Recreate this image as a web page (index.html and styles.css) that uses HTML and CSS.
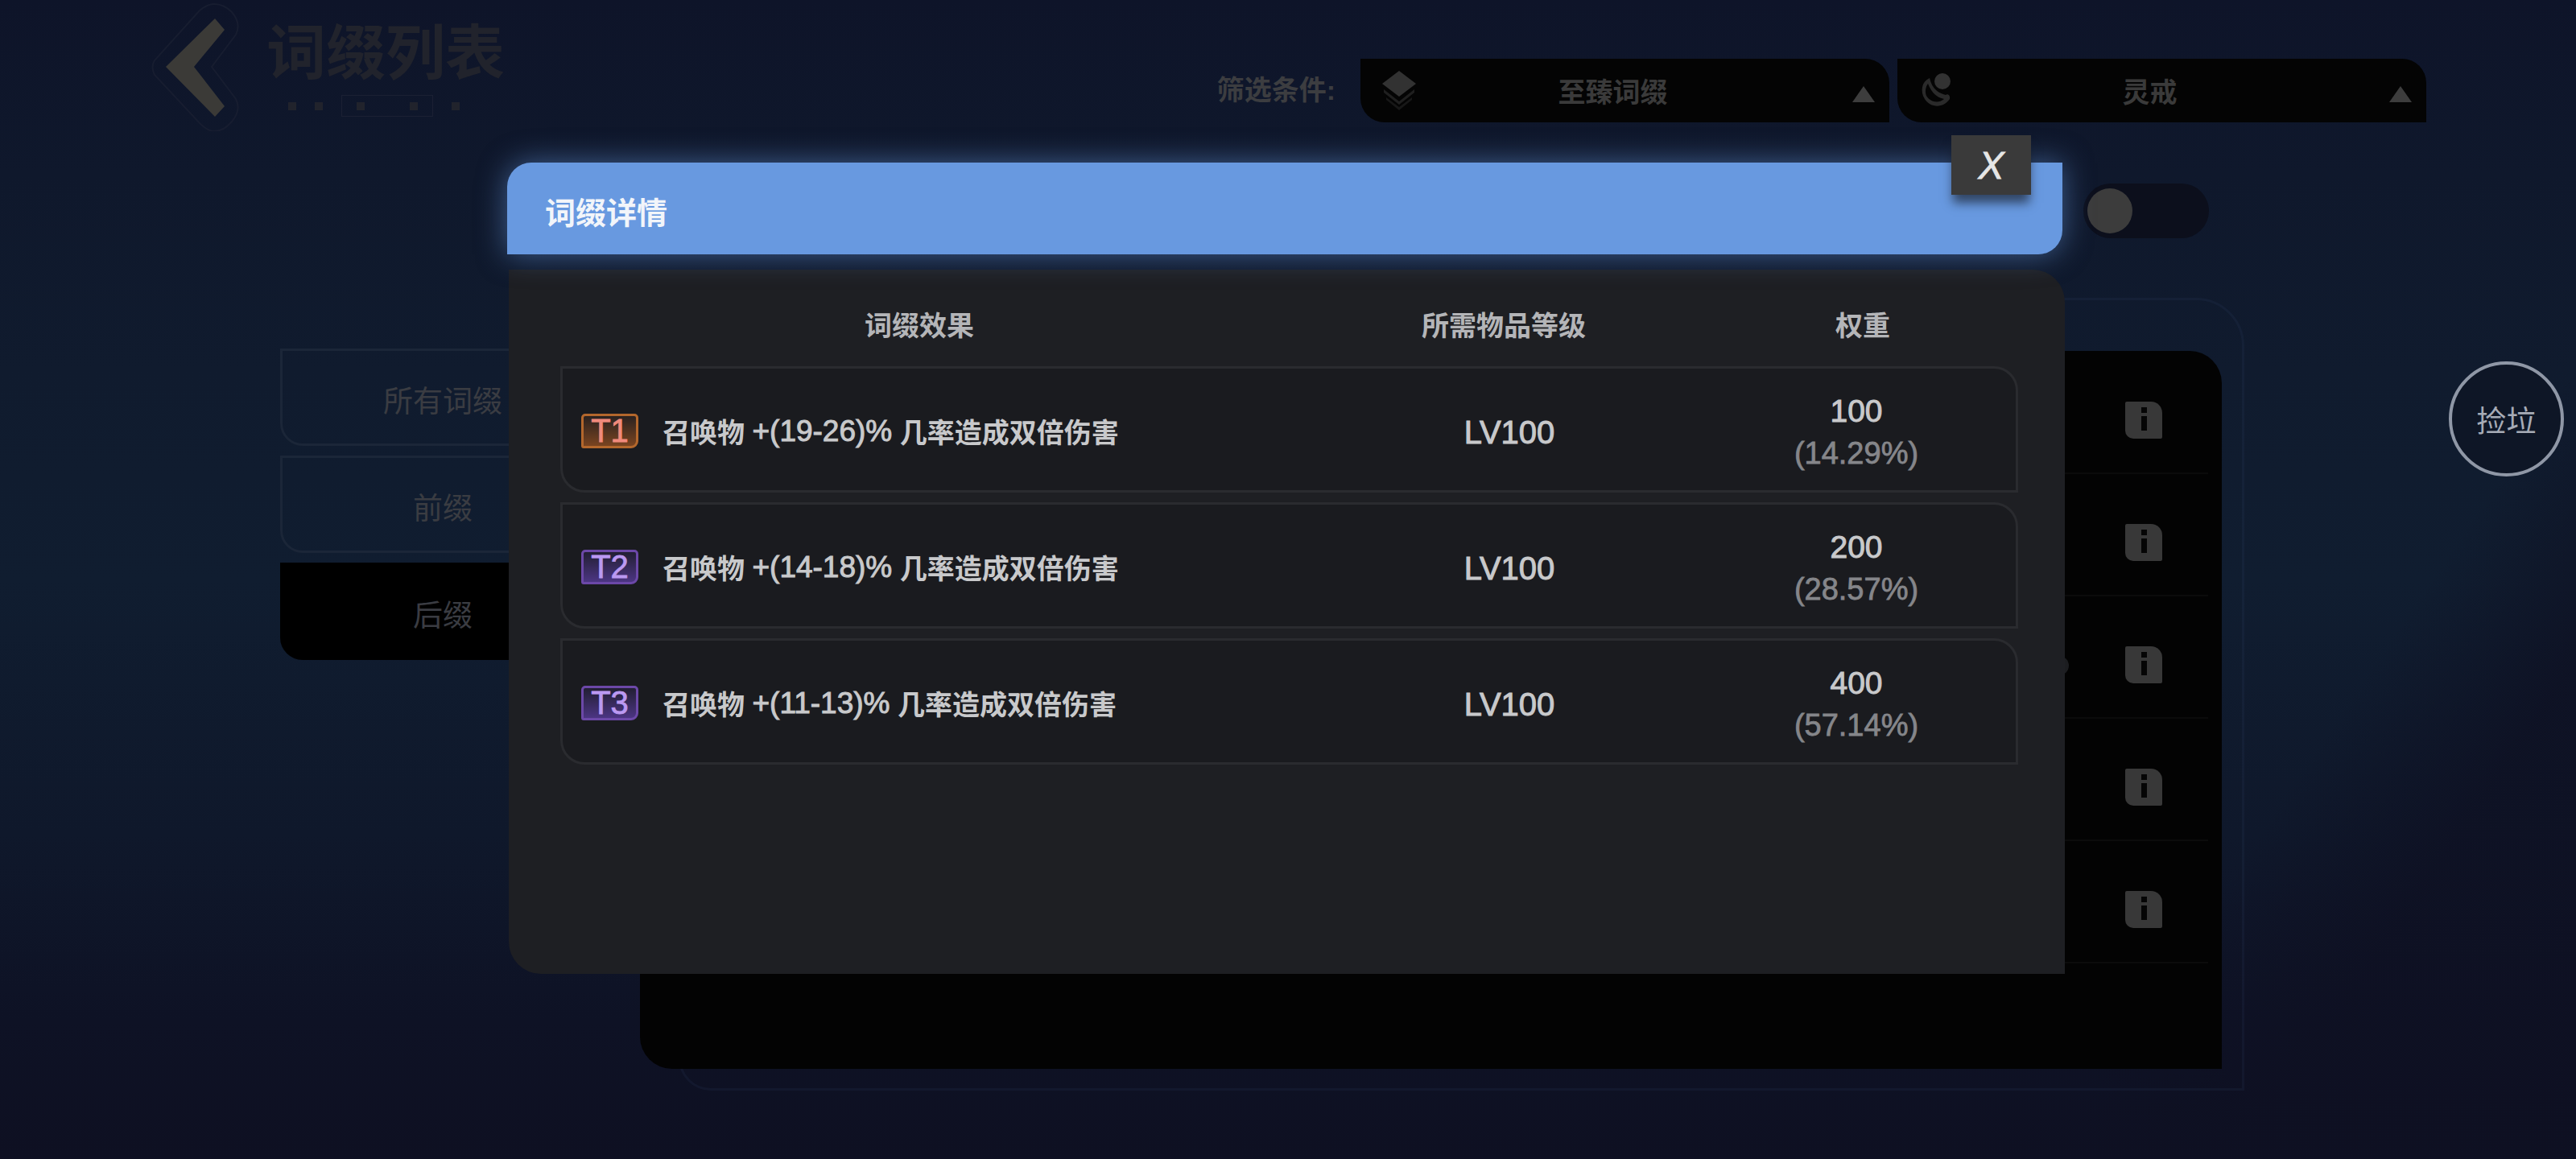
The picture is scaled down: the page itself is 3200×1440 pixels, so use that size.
FILE: index.html
```html
<!DOCTYPE html>
<html lang="zh-CN">
<head>
    <meta charset="UTF-8">
    <title>词缀列表</title>
    <link rel="stylesheet" href="styles.css">
</head>
<body>
    <div class="page">
        <header class="topbar">
            <a class="back">
                <svg width="110" height="160" viewBox="0 0 110 160">
                    <path d="M78 2 Q90 2 100 12 Q112 26 105 40 L75 80 L105 120 Q112 134 100 148 Q90 160 78 160 Q70 160 60 150 L4 90 Q-1 80 4 72 L60 10 Q70 2 78 2 Z" fill="none" stroke="#171d30" stroke-width="2"/>
                    <path d="M79 20 L91 34 L53 80 L91 129 L79 142 L18 80 Z" fill="#3b3a37"/>
                </svg>
            </a>
            <div class="page-title">
                <h1>词缀列表</h1>
                <div class="title-marks">
                    <i></i><i></i>
                    <span class="marks-box"><i></i><i></i></span>
                    <i></i>
                </div>
            </div>
            <div class="filters">
                <span class="filter-label">筛选条件:</span>
                <div class="dropdown">
                    <svg class="dropdown-icon" width="42" height="50" viewBox="0 0 42 50">
                        <path d="M21 0 L42 16 L21 32 L0 16 Z" fill="#323232"/>
                        <path d="M2 23 L21 38 L40 23 L40 27 L21 42 L2 27 Z" fill="#1f1f1f"/>
                        <path d="M5 33 L21 45 L37 33 L37 36 L21 49 L5 36 Z" fill="#171717"/>
                    </svg>
                    <span class="dropdown-text">至臻词缀</span>
                    <span class="dropdown-arrow"></span>
                </div>
                <div class="dropdown">
                    <svg class="dropdown-icon dropdown-icon-ring" width="42" height="46" viewBox="0 0 42 46">
                        <circle cx="29" cy="11" r="10" fill="#323232"/>
                        <path d="M13 7 C3 11 1 24 7 33 C14 44 30 45 38 33 C39 28 35 26 33 28 C25 26 16 21 13 7 Z M11 14 C16 26 22 31 31 33 C24 39 14 37 9 29 C7 24 8 18 11 14 Z" fill="#2a2a2a" fill-rule="evenodd"/>
                    </svg>
                    <span class="dropdown-text">灵戒</span>
                    <span class="dropdown-arrow"></span>
                </div>
            </div>
        </header>

        <div class="toggle-row">
            <div class="toggle"><span class="toggle-knob"></span></div>
        </div>

        <div class="content">
            <div class="tabs">
                <div class="tab">所有词缀</div>
                <div class="tab">前缀</div>
                <div class="tab tab-active">后缀</div>
            </div>

            <div class="panel">
                <div class="panel-row"><span class="info-icon"><b></b></span></div>
                <div class="panel-row"><span class="info-icon"><b></b></span></div>
                <div class="panel-row"><span class="row-dot"></span><span class="info-icon"><b></b></span></div>
                <div class="panel-row"><span class="info-icon"><b></b></span></div>
                <div class="panel-row"><span class="info-icon"><b></b></span></div>
            </div>

            <button class="pick-btn">捡垃</button>
        </div>

        <div class="modal">
            <div class="modal-header">词缀详情</div>
            <button class="modal-close">X</button>
            <div class="modal-body">
                <div class="table-head">
                    <span>词缀效果</span>
                    <span>所需物品等级</span>
                    <span>权重</span>
                </div>
                <div class="affix-row">
                    <div class="affix-effect"><span class="tier tier-1">T1</span>召唤物 <span class="num">+(19-26)%</span> 几率造成双倍伤害</div>
                    <div class="affix-level">LV100</div>
                    <div class="affix-weight">100<small>(14.29%)</small></div>
                </div>
                <div class="affix-row">
                    <div class="affix-effect"><span class="tier tier-2">T2</span>召唤物 <span class="num">+(14-18)%</span> 几率造成双倍伤害</div>
                    <div class="affix-level">LV100</div>
                    <div class="affix-weight">200<small>(28.57%)</small></div>
                </div>
                <div class="affix-row">
                    <div class="affix-effect"><span class="tier tier-2">T3</span>召唤物 <span class="num">+(11-13)%</span> 几率造成双倍伤害</div>
                    <div class="affix-level">LV100</div>
                    <div class="affix-weight">400<small>(57.14%)</small></div>
                </div>
            </div>
        </div>
    </div>
</body>
</html>
```

FILE: styles.css
```css
* {
    box-sizing: border-box;
}
body {
    margin: 0;
    font-family: "Liberation Sans", "Noto Sans CJK SC", sans-serif;
    background-color: #0e1428;
}
.page {
    position: relative;
    z-index: 0;
    width: 3200px;
    height: 1440px;
    overflow: hidden;
    background:
        linear-gradient(124deg, rgba(14, 16, 34, 0) 84%, rgba(14, 16, 34, 0.75) 90%),
        linear-gradient(180deg, #0e1429 0%, #0f182c 15%, #101b2e 32%, #101d30 50%, #0f182b 72%, #0e1225 88%, #0e1022 100%);
}

/* top bar */
.topbar {
    display: flex;
    height: 152px;
    padding-left: 188px;
    padding-right: 186px;
}
.back {
    display: block;
    width: 110px;
    margin-top: 3px;
}
.page-title {
    margin-left: 33px;
    padding-top: 27px;
}
.page-title h1 {
    margin: 0;
    font-size: 74px;
    line-height: 80px;
    font-weight: 700;
    color: #21232c;
}
.title-marks {
    display: flex;
    align-items: center;
    gap: 23px;
    margin-top: 11px;
    padding-left: 27px;
    height: 27px;
}
.title-marks i {
    display: block;
    width: 10px;
    height: 10px;
    background-color: #21232c;
}
.marks-box {
    display: flex;
    justify-content: space-between;
    width: 114px;
    height: 27px;
    padding: 8px 18px;
    border: 1px solid #1b2033;
}
.filters {
    display: flex;
    align-items: flex-start;
    gap: 10px;
    margin-left: auto;
    padding-top: 73px;
}
.filter-label {
    margin-right: 21px;
    font-size: 34px;
    line-height: 79px;
    font-weight: 700;
    color: #3c3d40;
}
.dropdown {
    position: relative;
    display: flex;
    align-items: center;
    justify-content: center;
    width: 657px;
    height: 79px;
    background-color: #040404;
    border-radius: 0 30px 0 30px;
}
.dropdown-icon {
    position: absolute;
    left: 27px;
    top: 15px;
}
.dropdown-icon-ring {
    top: 17px;
}
.dropdown-text {
    margin-right: 30px;
    font-size: 34px;
    font-weight: 700;
    color: #3a3a3a;
}
.dropdown-arrow {
    position: absolute;
    right: 18px;
    top: 34px;
    width: 0;
    height: 0;
    border-left: 14px solid transparent;
    border-right: 14px solid transparent;
    border-bottom: 20px solid #3d3d3d;
}

.toggle-row {
    display: flex;
    justify-content: flex-end;
    margin-top: 76px;
    padding-right: 456px;
}
.toggle {
    display: flex;
    align-items: center;
    width: 156px;
    height: 68px;
    padding-left: 5px;
    background-color: #0c0f1c;
    border-radius: 34px;
}
.toggle-knob {
    width: 56px;
    height: 56px;
    background-color: #3c3c3c;
    border-radius: 50%;
}

/* tabs and list */
.content {
    display: flex;
    align-items: flex-start;
    margin-top: 137px;
    padding-left: 348px;
}
.tabs {
    display: flex;
    flex-direction: column;
    gap: 12px;
    width: 420px;
}
.tab {
    display: flex;
    align-items: center;
    justify-content: center;
    height: 121px;
    padding-top: 5px;
    padding-right: 16px;
    font-size: 37px;
    color: #3a3c42;
    border: 3px solid #1b2638;
    border-radius: 0 0 0 28px;
}
.tab-active {
    background-color: #000;
    border-color: #000;
}
.panel {
    position: relative;
    width: 1965px;
    height: 892px;
    margin-left: 27px;
    margin-top: 3px;
    padding: 20px 17px 0 0;
    background-color: #030303;
    border-radius: 0 40px 0 40px;
}
.panel::before {
    content: "";
    position: absolute;
    left: 48px;
    right: -28px;
    top: -66px;
    bottom: -27px;
    border: 3px solid rgba(60, 80, 120, 0.12);
    border-radius: 0 60px 0 40px;
    z-index: -1;
}
.panel-row {
    position: relative;
    display: flex;
    align-items: center;
    justify-content: flex-end;
    height: 133px;
    margin-bottom: 19px;
    padding-right: 57px;
    border-bottom: 2px solid #0b0b0b;
}
.row-dot {
    position: absolute;
    left: 1751px;
    top: 55px;
    width: 24px;
    height: 24px;
    background-color: #1c1d20;
    border-radius: 50%;
}
.info-icon {
    display: flex;
    align-items: center;
    justify-content: center;
    width: 46px;
    height: 46px;
    background-color: #383838;
    border-radius: 2px 14px 2px 10px;
}
.info-icon b {
    position: relative;
    width: 7px;
    height: 18px;
    margin-top: 8px;
    background-color: #050505;
}
.info-icon b::before {
    content: "";
    position: absolute;
    left: 0;
    top: -11px;
    width: 7px;
    height: 7px;
    background-color: #050505;
}
.pick-btn {
    width: 143px;
    height: 143px;
    margin-left: 282px;
    margin-top: 16px;
    padding: 0;
    font-family: inherit;
    font-size: 37px;
    color: #a6abb6;
    background-color: #0e1626;
    border: 4px solid #8f97a6;
    border-radius: 50%;
}

/* modal */
.modal {
    position: absolute;
    left: 630px;
    top: 202px;
    width: 1935px;
}
.modal-header {
    position: relative;
    z-index: 2;
    display: flex;
    align-items: center;
    width: 1932px;
    height: 114px;
    padding-left: 47px;
    padding-top: 4px;
    font-size: 38px;
    font-weight: 700;
    color: #f2f5fa;
    background-color: #6899e0;
    border-radius: 30px 0 30px 0;
    box-shadow: 0 0 36px rgba(104, 153, 224, 0.55);
}
.modal-close {
    position: absolute;
    z-index: 3;
    left: 1794px;
    top: -34px;
    width: 99px;
    height: 74px;
    padding: 0;
    font-family: inherit;
    font-size: 48px;
    font-style: italic;
    color: #e6e6e6;
    background-color: #3a3a3a;
    border: none;
    box-shadow: 0 12px 12px -2px rgba(20, 24, 34, 0.65);
    -webkit-text-stroke: 0.8px #e6e6e6;
}
.modal-body {
    width: 1933px;
    height: 875px;
    margin-top: 19px;
    margin-left: 2px;
    padding: 0 0 0 64px;
    background-color: #1e1f23;
    border-radius: 0 40px 0 40px;
}
.table-head {
    display: grid;
    grid-template-columns: 892px 560px 332px;
    height: 120px;
    align-items: center;
    padding-top: 20px;
    text-align: center;
    font-size: 34px;
    line-height: 60px;
    font-weight: 700;
    color: #b4b5b8;
}
.affix-row {
    display: grid;
    grid-template-columns: 889px 574px 288px;
    align-items: center;
    width: 1811px;
    height: 157px;
    margin-bottom: 12px;
    background-color: #1a1b1f;
    border: 3px solid #2a2b2f;
    border-radius: 0 30px 0 30px;
}
.affix-effect {
    display: flex;
    align-items: center;
    padding-left: 23px;
    padding-top: 4px;
    font-size: 34px;
    font-weight: 700;
    color: #c8c9cb;
    white-space: pre;
}
.num {
    font-size: 37px;
    font-weight: 400;
    -webkit-text-stroke: 1px #c8c9cb;
}
.tier {
    display: block;
    width: 71px;
    height: 43px;
    margin-right: 30px;
    text-align: center;
    font-size: 40px;
    line-height: 37px;
    font-weight: 400;
    border-width: 3px;
    border-style: solid;
    border-radius: 5px 5px 9px 3px;
}
.tier-1 {
    color: #f08a7c;
    border-color: #b3672c;
    background: linear-gradient(180deg, #2a2220, #7a4420);
    -webkit-text-stroke: 0.8px #f08a7c;
}
.tier-2 {
    color: #bb99f2;
    border-color: #6c48a8;
    background: linear-gradient(180deg, #221f33, #4c3583);
    -webkit-text-stroke: 0.8px #bb99f2;
}
.affix-level {
    padding-top: 8px;
    text-align: center;
    font-size: 40px;
    color: #c8c9cb;
    -webkit-text-stroke: 1px #c8c9cb;
}
.affix-weight {
    padding-top: 6px;
    text-align: center;
    font-size: 39px;
    line-height: 53px;
    color: #c8c9cb;
    -webkit-text-stroke: 1px #c8c9cb;
}
.affix-weight small {
    display: block;
    font-size: 38px;
    color: #85868a;
    -webkit-text-stroke: 0.8px #85868a;
}
```
